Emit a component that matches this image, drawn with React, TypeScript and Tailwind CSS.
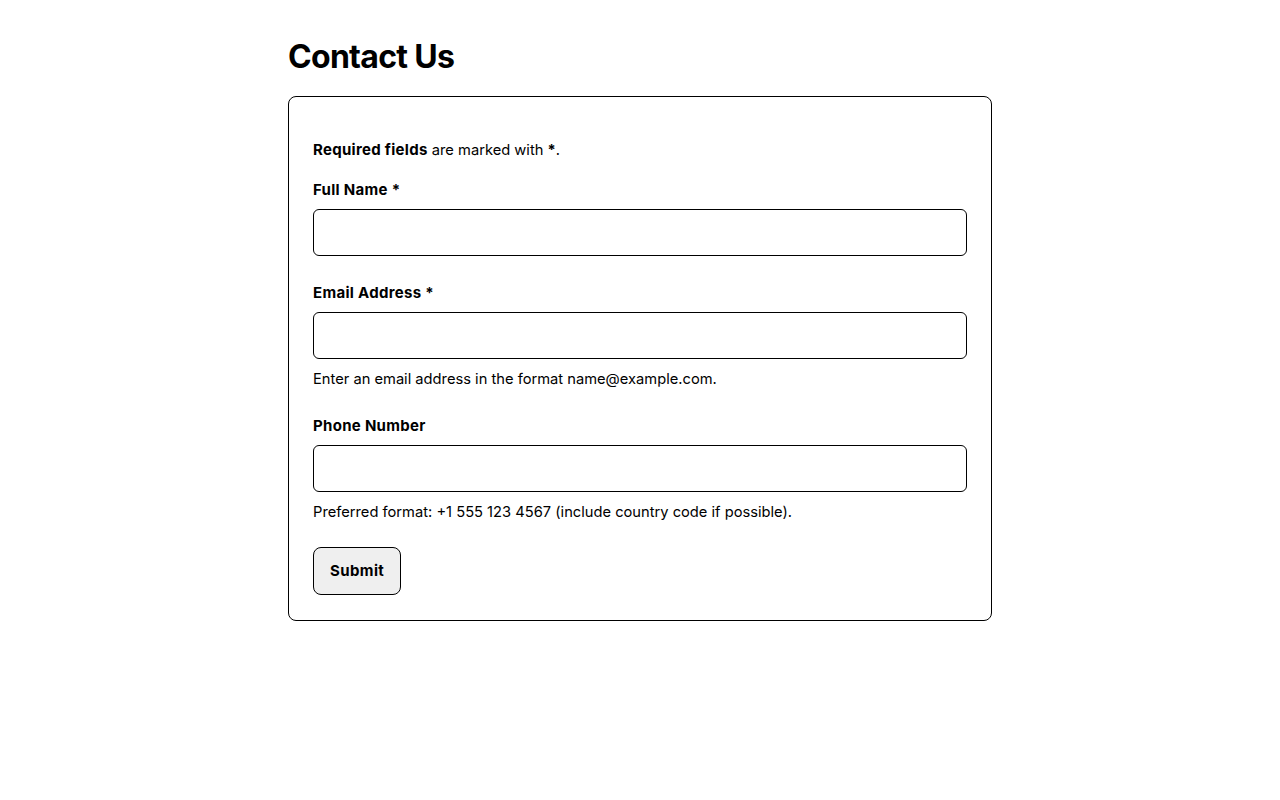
import React from "react";

const fields = [
  { id: "name", label: "Full Name *", type: "text" },
  {
    id: "email",
    label: "Email Address *",
    type: "email",
    hint: "Enter an email address in the format name@example.com.",
  },
  {
    id: "phone",
    label: "Phone Number",
    type: "tel",
    hint: "Preferred format: +1 555 123 4567 (include country code if possible).",
  },
];

export default function App() {
  return (
    <div className="min-h-screen bg-white text-black font-['Inter',sans-serif]">
      <div className="mx-auto w-[704px] pt-[37px]">
        <h1 className="text-[32px] leading-[40px] font-bold tracking-[-0.7px] mb-[19px]">
          Contact Us
        </h1>

        <form
          className="border border-black rounded-lg px-6 pt-[41px] pb-[25px] text-[14.7px] leading-6"
          onSubmit={(e) => e.preventDefault()}
        >
          <p className="mb-[15px]">
            <strong className="font-bold text-[15px] tracking-[0.3px]">Required fields</strong> are
            marked with <strong className="font-bold">*</strong>.
          </p>

          {fields.map((f, i) => (
            <div key={f.id} className={i === fields.length - 1 ? "mb-[25px]" : "mb-6"}>
              <label
                htmlFor={f.id}
                className="block pt-px mb-[7px] font-bold text-[15px] tracking-[0.3px]"
              >
                {f.label}
              </label>
              <input
                id={f.id}
                type={f.type}
                className="block w-full h-[47px] border border-black rounded-md px-3"
              />
              {f.hint && <p className="mt-[10px] leading-5">{f.hint}</p>}
            </div>
          ))}

          <button
            type="submit"
            className="h-[48px] px-4 border border-black rounded-lg bg-[#efefef] font-bold text-[15px] tracking-[0.4px]"
          >
            Submit
          </button>
        </form>
      </div>
    </div>
  );
}
